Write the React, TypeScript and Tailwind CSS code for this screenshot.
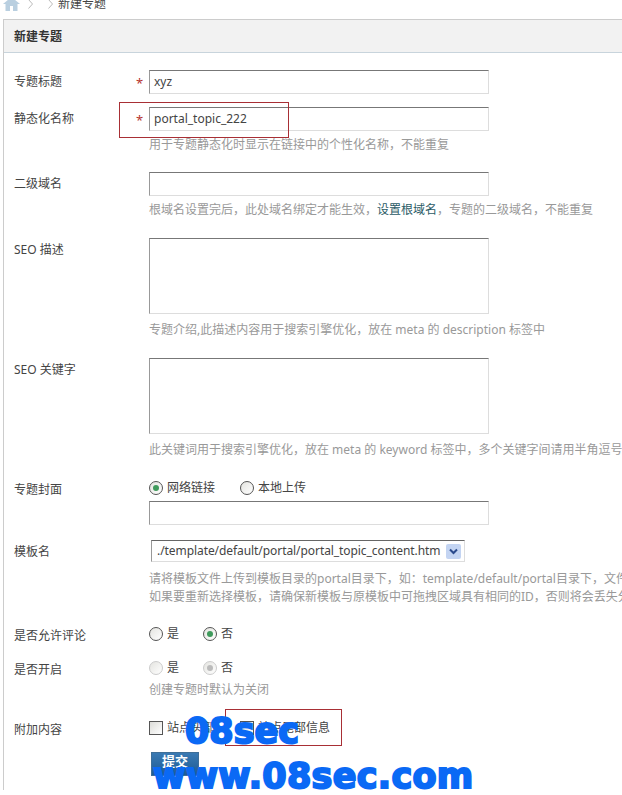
const FONT = "font-['Noto_Sans','Noto_Sans_CJK_SC',sans-serif]";

function Radio({ checked = false, disabled = false }: { checked?: boolean; disabled?: boolean }) {
  return (
    <span
      className={`flex h-[14px] w-[14px] shrink-0 items-center justify-center rounded-full border bg-gradient-to-br from-[#e4e4e0] to-white ${
        disabled ? "border-[#ccc]" : "border-[#555]"
      }`}
    >
      {checked && (
        <span className={`h-[6px] w-[6px] rounded-full ${disabled ? "bg-[#bbb]" : "bg-[#3f9a5c]"}`} />
      )}
    </span>
  );
}

function Check() {
  return <span className="h-[14px] w-[14px] shrink-0 border border-[#555] bg-gradient-to-br from-[#dcdcd8] to-white" />;
}

function TextBox({ value = "" }: { value?: string }) {
  return (
    <div className="flex h-[24px] w-[340px] items-center border border-[#ddd] border-t-[#777] border-l-[#999] bg-white pl-[4px] text-[12px] text-[#444]">
      {value}
    </div>
  );
}

function Area() {
  return <div className="h-[76px] w-[340px] border border-[#ddd] border-t-[#777] border-l-[#999] bg-white" />;
}

function Help({ children, className = "" }: { children: React.ReactNode; className?: string }) {
  return <div className={`whitespace-nowrap text-[12px] leading-[20px] text-[#999] ${className}`}>{children}</div>;
}

function Row({
  label,
  required = false,
  className = "",
  children,
}: {
  label: string;
  required?: boolean;
  className?: string;
  children: React.ReactNode;
}) {
  return (
    <div className={`flex ${className}`}>
      <div className="h-[20px] w-[122px] shrink-0 pt-[2px] text-[12px] leading-[20px] text-[#444]">{label}</div>
      <div className="h-[20px] w-[13px] shrink-0 pt-[3px] text-[13px] leading-[20px] text-[#b5352f]">{required ? "*" : ""}</div>
      <div className="min-w-0 flex-1">{children}</div>
    </div>
  );
}

function Option({ text, checked, disabled, className = "" }: { text: string; checked?: boolean; disabled?: boolean; className?: string }) {
  return (
    <span className={`flex items-center gap-[4px] ${className}`}>
      <Radio checked={checked} disabled={disabled} />
      <span className="text-[12px] leading-[20px] text-[#444]">{text}</span>
    </span>
  );
}

export default function App() {
  return (
    <div className={`relative h-[795px] w-[622px] overflow-hidden bg-white ${FONT}`}>
      {/* breadcrumb, cut off by the top of the shot */}
      <div className="relative flex h-[19px] overflow-hidden">
        <div className="flex h-[7px] items-center text-[12px] text-[#444]">
          <svg className="ml-[3px] shrink-0" width="17" height="14" viewBox="0 0 17 14">
            <path d="M8.5 0 L17 7 H14.5 V14 H10 V9 H7 V14 H2.5 V7 H0 Z" fill="#b9cfe0" />
          </svg>
          <svg className="ml-[8px] shrink-0" width="5" height="10" viewBox="0 0 5 10">
            <path d="M0.5 0.5 L4.5 5 L0.5 9.5" fill="none" stroke="#bbb" />
          </svg>
          <svg className="ml-[15px] shrink-0" width="5" height="10" viewBox="0 0 5 10">
            <path d="M0.5 0.5 L4.5 5 L0.5 9.5" fill="none" stroke="#bbb" />
          </svg>
          <span className="ml-[5px] whitespace-nowrap">新建专题</span>
        </div>
      </div>

      {/* panel */}
      <div className="ml-[3px] h-[771px] border-t border-l border-[#ccc]">
        <div className="flex h-[33px] items-center border-b border-[#c8d4dc] bg-[#f2f2f2] pt-[2px] pl-[10px] text-[12px] font-bold text-[#333]">
          新建专题
        </div>
        <div className="pt-[17px] pl-[10px]">
          <Row label="专题标题" required>
            <TextBox value="xyz" />
          </Row>
          <Row label="静态化名称" required className="mt-[13px]">
            <TextBox value="portal_topic_222" />
            <Help className="mt-[4px]">用于专题静态化时显示在链接中的个性化名称，不能重复</Help>
          </Row>
          <Row label="二级域名" className="mt-[17px]">
            <TextBox />
            <Help className="mt-[4px]">
              根域名设置完后，此处域名绑定才能生效，<span className="text-[#2b5b66]">设置根域名</span>，专题的二级域名，不能重复
            </Help>
          </Row>
          <Row label="SEO 描述" className="mt-[18px]">
            <Area />
            <Help className="mt-[6px]">专题介绍,此描述内容用于搜索引擎优化，放在 meta 的 description 标签中</Help>
          </Row>
          <Row label="SEO 关键字" className="mt-[18px]">
            <Area />
            <Help className="mt-[6px]">此关键词用于搜索引擎优化，放在 meta 的 keyword 标签中，多个关键字间请用半角逗号</Help>
          </Row>
          <Row label="专题封面" className="mt-[18px]">
            <div className="flex h-[20px] items-center">
              <Option text="网络链接" checked className="w-[91px]" />
              <Option text="本地上传" />
            </div>
            <div className="mt-[3px]">
              <TextBox />
            </div>
          </Row>
          <Row label="模板名" className="mt-[15px]">
            <div className="ml-[2px] flex h-[22px] w-[314px] items-center justify-between border border-[#ddd] border-t-[#666] border-l-[#999] pr-[3px] pl-[5px] text-[12px] tracking-[-0.07px] text-[#444]">
              <span className="whitespace-nowrap">./template/default/portal/portal_topic_content.htm</span>
              <span className="flex h-[15px] w-[15px] shrink-0 items-center justify-center rounded-[2px] bg-[#c3d4f2]">
                <svg width="9" height="7" viewBox="0 0 9 7">
                  <path d="M1 1.5 L4.5 5 L8 1.5" fill="none" stroke="#2a4a8c" strokeWidth="2" />
                </svg>
              </span>
            </div>
            <div className="mt-[8px] whitespace-nowrap text-[12px] leading-[18px] text-[#999]">
              <div>请将模板文件上传到模板目录的portal目录下，如：template/default/portal目录下，文件名称为</div>
              <div>如果要重新选择模板，请确保新模板与原模板中可拖拽区域具有相同的ID，否则将会丢失分配的内容</div>
            </div>
          </Row>
          <Row label="是否允许评论" className="mt-[18px]">
            <div className="flex h-[20px] items-center">
              <Option text="是" className="w-[54px]" />
              <Option text="否" checked />
            </div>
          </Row>
          <Row label="是否开启" className="mt-[14px]">
            <div className="flex h-[20px] items-center">
              <Option text="是" disabled className="w-[54px]" />
              <Option text="否" checked disabled />
            </div>
            <Help className="mt-[2px]">创建专题时默认为关闭</Help>
          </Row>
          <Row label="附加内容" className="mt-[18px]">
            <div className="flex h-[20px] items-center text-[12px] leading-[20px] text-[#444]">
              <span className="flex w-[91px] items-center gap-[4px]">
                <Check />
                站点头部
              </span>
              <span className="flex items-center gap-[4px]">
                <Check />
                站点尾部信息
              </span>
            </div>
            <button className="mt-[14px] ml-[2px] flex h-[24px] w-[48px] items-center justify-center border border-[#3f6f98] bg-gradient-to-b from-[#3a7ab3] to-[#1d5b96] pb-[4px] text-[13px] font-bold text-white">
              提交
            </button>
          </Row>
        </div>
      </div>

      {/* red annotation boxes */}
      <div className="absolute top-[102px] left-[119px] h-[36px] w-[170px] border border-[#a82f35]" />
      <div className="absolute top-[709px] left-[225px] h-[37px] w-[117px] border border-[#a82f35]" />

      {/* watermark */}
      <div className="absolute top-[710px] left-[185px] font-['DejaVu_Sans',sans-serif] text-[35px] leading-[42px] font-bold text-[#0a69f5] [-webkit-text-stroke:2px_#0a69f5]">
        08sec
      </div>
      <div className="absolute top-[755px] left-[153px] font-['DejaVu_Sans',sans-serif] text-[35px] leading-[42px] font-bold tracking-[0.3px] whitespace-nowrap text-[#0a69f5] [-webkit-text-stroke:2px_#0a69f5]">
        www.08sec.com
      </div>
    </div>
  );
}
